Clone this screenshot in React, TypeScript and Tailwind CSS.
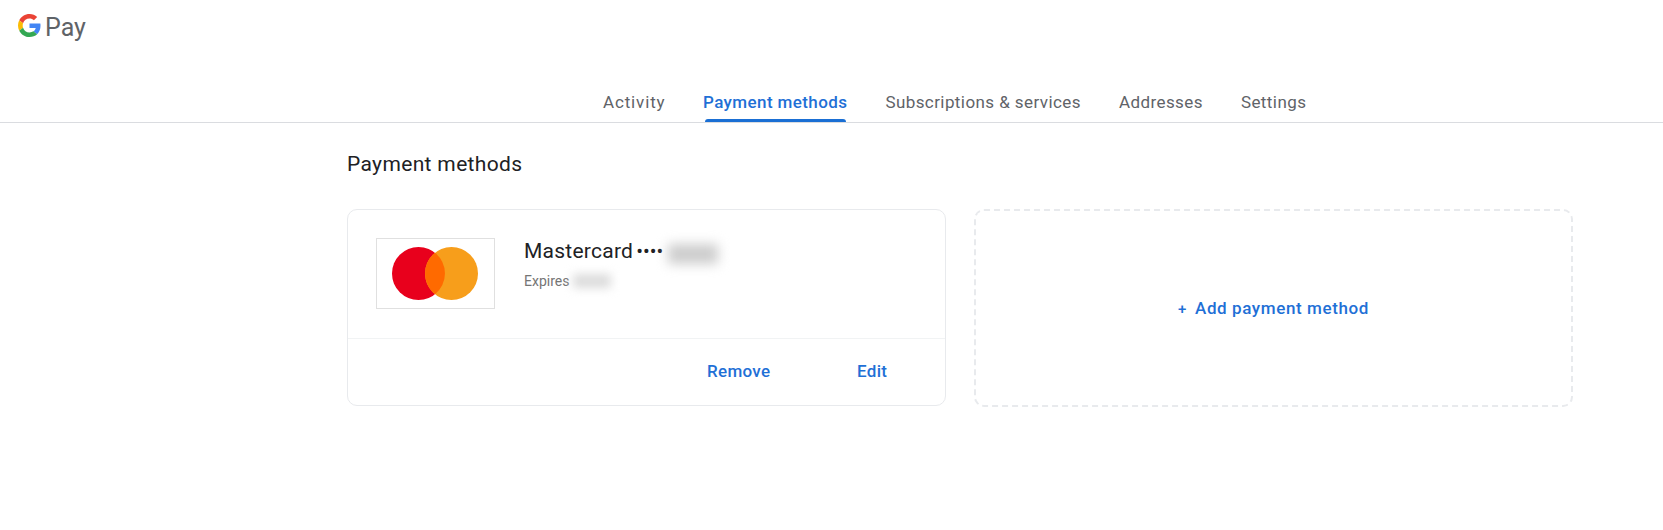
import React from "react";

const tabs = ["Activity", "Payment methods", "Subscriptions & services", "Addresses", "Settings"];

function GLogo() {
  return (
    <svg width="23" height="23" viewBox="0 0 48 48" className="shrink-0">
      <path fill="#EA4335" d="M24 9.5c3.54 0 6.71 1.22 9.21 3.6l6.85-6.85C35.9 2.38 30.47 0 24 0 14.62 0 6.51 5.38 2.56 13.22l7.98 6.19C12.43 13.72 17.74 9.5 24 9.5z" />
      <path fill="#4285F4" d="M46.98 24.55c0-1.57-.15-3.09-.38-4.55H24v9.02h12.94c-.58 2.96-2.26 5.48-4.78 7.18l7.73 6c4.51-4.18 7.09-10.36 7.09-17.65z" />
      <path fill="#FBBC05" d="M10.53 28.59c-.48-1.45-.76-2.99-.76-4.59s.27-3.14.76-4.59l-7.98-6.19C.92 16.46 0 20.12 0 24c0 3.88.92 7.54 2.56 10.78l7.97-6.19z" />
      <path fill="#34A853" d="M24 48c6.48 0 11.93-2.13 15.89-5.81l-7.73-6c-2.15 1.45-4.92 2.3-8.16 2.3-6.26 0-11.57-4.22-13.47-9.91l-7.98 6.19C6.51 42.62 14.62 48 24 48z" />
    </svg>
  );
}

function MastercardMark() {
  return (
    <svg width="86" height="53" viewBox="0 0 86 53" className="-translate-x-[1px]">
      <circle cx="26.5" cy="26.5" r="26.5" fill="#E8001C" />
      <circle cx="59.5" cy="26.5" r="26.5" fill="#F79E1B" />
      <path d="M43 5.8a26.5 26.5 0 0 1 0 41.4a26.5 26.5 0 0 1 0-41.4z" fill="#FF6A00" />
    </svg>
  );
}

export default function App() {
  return (
    <div className="h-[530px] w-[1663px] overflow-hidden bg-white font-['Roboto',sans-serif]">
      <header className="flex h-[123px] flex-col border-b border-[#dadce0]">
        <div className="flex h-[86px] items-start gap-[4px] pl-[18px] pt-[14px]">
          <GLogo />
          <span className="text-[25px] leading-[28px] text-[#5f6368]">Pay</span>
        </div>
        <nav className="flex h-[36px] gap-[38px] pl-[603px]">
          {tabs.map((t) => (
            <a
              key={t}
              className={
                t === "Payment methods"
                  ? "flex h-full flex-col items-center justify-between pt-[3px] text-[17px] font-medium leading-[26px] tracking-[0.4px] text-[#1f70d6]"
                  : t === "Activity"
                    ? "flex h-full w-[62px] flex-col pt-[3px] text-[17px] font-normal leading-[26px] tracking-[0.85px] text-[#5f6368]"
                    : "flex h-full flex-col items-center pt-[3px] text-[17px] font-normal leading-[26px] tracking-[0.42px] text-[#5f6368]"
              }
            >
              <span>{t}</span>
              {t === "Payment methods" && <span className="h-[3px] w-[141px] rounded-t-[3px] bg-[#1a6fd4]" />}
            </a>
          ))}
        </nav>
      </header>

      <main className="pl-[347px] pt-[28px]">
        <h1 className="text-[21px] font-normal leading-[26px] tracking-[0.35px] text-[#202124]">Payment methods</h1>
        <div className="mt-[32px] flex gap-[28px]">
          <section className="flex h-[197px] w-[599px] flex-col rounded-[10px] border border-[#e8eaed]">
            <div className="flex h-[129px] items-start border-b border-[#f1f3f4] pl-[28px] pt-[28px]">
              <div className="flex h-[71px] w-[119px] items-center justify-center border border-[#e0e0e0]">
                <MastercardMark />
              </div>
              <div className="ml-[29px]">
                <div className="flex items-center text-[21px] leading-[27px] tracking-[0.25px] text-[#202124]">
                  <span>Mastercard</span>
                  <span className="ml-[3px] text-[20px] leading-[27px] tracking-[0px]">••••</span>
                  <span className="ml-[5px] h-[20px] w-[50px] translate-y-[2px] bg-[#cdcdcd] blur-[6px]" />
                </div>
                <div className="mt-[6px] flex items-center text-[14px] leading-[20px] text-[#757575]">
                  <span>Expires</span>
                  <span className="ml-[4px] h-[14px] w-[38px] bg-[#dcdcdc] blur-[5px]" />
                </div>
              </div>
            </div>
            <div className="flex flex-1 items-center pb-[1px] pl-[359px] text-[17px] font-medium tracking-[0.3px] text-[#1f70d6]">
              <a className="w-[150px]">Remove</a>
              <a>Edit</a>
            </div>
          </section>
          <section className="flex h-[198px] w-[599px] items-center justify-center rounded-[10px] border-2 border-dashed border-[#e8eaed]">
            <a className="flex translate-y-[1px] items-center gap-[8px] text-[17px] font-medium tracking-[0.6px] text-[#1f70d6]">
              <span className="text-[15px]">+</span>
              <span>Add payment method</span>
            </a>
          </section>
        </div>
      </main>
    </div>
  );
}
